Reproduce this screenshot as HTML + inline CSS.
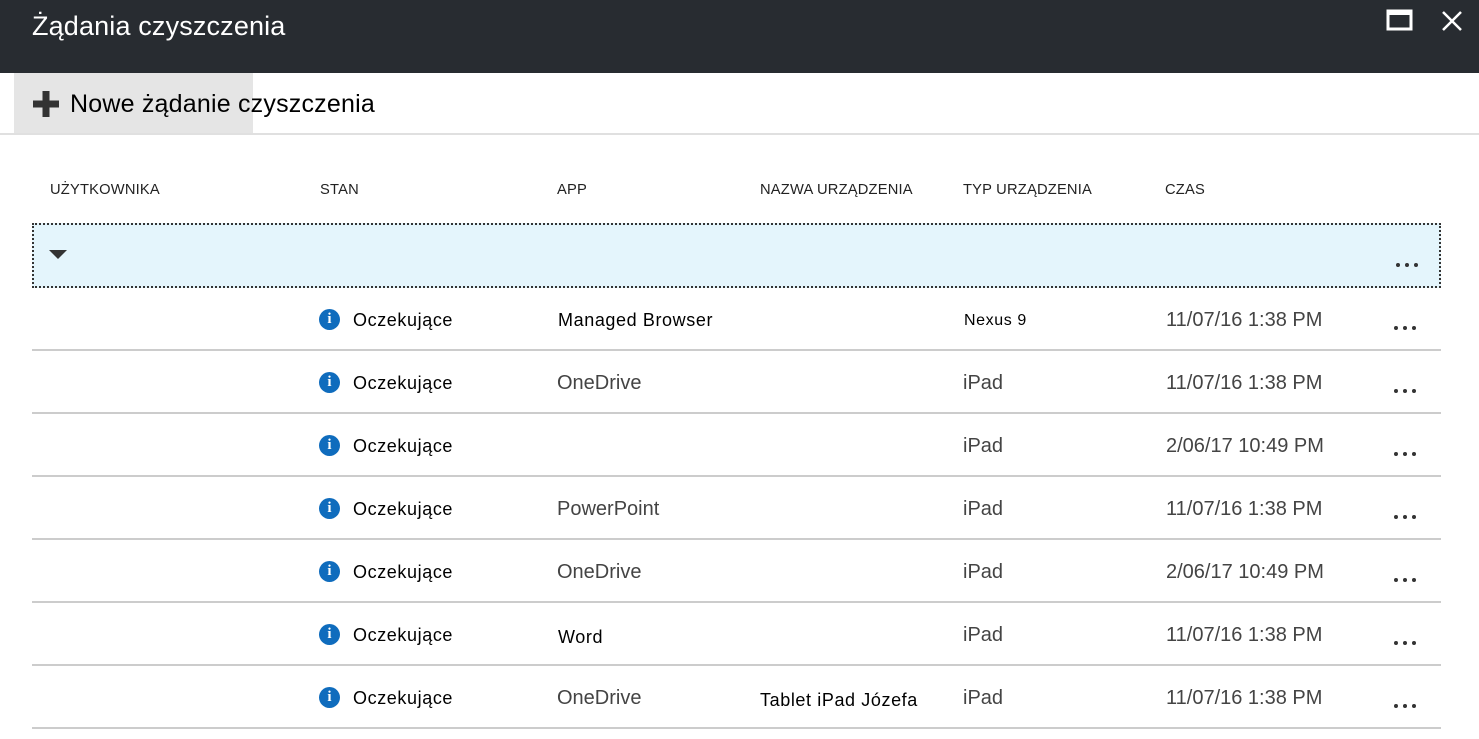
<!DOCTYPE html>
<html><head><meta charset="utf-8"><style>
*{margin:0;padding:0;box-sizing:border-box}
body{width:1479px;height:739px;overflow:hidden;background:#fff;font-family:"Liberation Sans",Arial,sans-serif;position:relative}
.abs{position:absolute}
.hdr{left:0;top:0;width:1479px;height:73px;background:#282c31}
.title{left:32px;top:11px;color:#fff;font-size:27px;white-space:nowrap;letter-spacing:.15px}
.btn{left:14px;top:73px;width:239px;height:61px;background:#e5e5e5}
.btntxt{left:70px;top:90px;font-size:25px;color:#000;white-space:nowrap;letter-spacing:.2px}
.tb{left:0;top:133px;width:1479px;height:2px;background:#e0e0e0}
.ch{top:182px;font-size:14.7px;color:#222;white-space:nowrap;letter-spacing:.2px}
.grp{left:32px;top:223px;width:1409px;height:65px;background:#e4f5fc;border:2px dotted #333}
.row{left:32px;width:1409px;height:63px;border-bottom:2px solid #ccc}
.t{position:absolute;white-space:nowrap}
.b{font-size:18px;color:#000;letter-spacing:.6px}
.g{font-size:20px;color:#444}
.dots{position:absolute;left:1362px;display:flex;gap:5px}
.dots i{display:block;width:4px;height:4px;border-radius:2px;background:#333}
.info{position:absolute;left:287px;width:21px;height:21px;border-radius:50%;background:#0f6cbd;color:#fff;font:bold 15px/21px "Liberation Serif",serif;text-align:center}
</style></head><body>
<div class="abs hdr"></div>
<div class="abs title">Żądania czyszczenia</div>
<svg class="abs" style="left:1386px;top:9px" width="28" height="24"><rect x="2" y="2" width="23" height="18" fill="none" stroke="#fff" stroke-width="3"/><rect x="2" y="2" width="23" height="4" fill="#fff"/></svg>
<svg class="abs" style="left:1440px;top:9px" width="24" height="24"><path d="M3 3L21 21M21 3L3 21" stroke="#fff" stroke-width="2.5"/></svg>
<div class="abs btn"></div>
<svg class="abs" style="left:32px;top:90px" width="28" height="28"><path d="M14 1V27M1 14H27" stroke="#333" stroke-width="7"/></svg>
<div class="abs btntxt">Nowe żądanie czyszczenia</div>
<div class="abs tb"></div>
<div class="abs ch" style="left:50px">UŻYTKOWNIKA</div>
<div class="abs ch" style="left:320px">STAN</div>
<div class="abs ch" style="left:557px">APP</div>
<div class="abs ch" style="left:760px">NAZWA URZĄDZENIA</div>
<div class="abs ch" style="left:963px">TYP URZĄDZENIA</div>
<div class="abs ch" style="left:1165px">CZAS</div>
<div class="abs grp">
<svg style="position:absolute;left:15px;top:25px" width="18" height="10"><path d="M0 0H18L9 9Z" fill="#333"/></svg>
<div class="dots" style="top:38px"><i></i><i></i><i></i></div>
</div>

<div class="abs row" style="top:288px"><div class="info" style="top:21px">i</div><div class="t b" style="left:321px;top:22px">Oczekujące</div><div class="t b" style="left:526px;top:22px">Managed Browser</div><div class="t b" style="left:932px;top:24px;font-size:16px">Nexus 9</div><div class="t g" style="left:1134px;top:21px">11/07/16 1:38 PM</div><div class="dots" style="top:38px"><i></i><i></i><i></i></div></div>
<div class="abs row" style="top:351px"><div class="info" style="top:21px">i</div><div class="t b" style="left:321px;top:22px">Oczekujące</div><div class="t g" style="left:525px;top:21px">OneDrive</div><div class="t g" style="left:931px;top:21px">iPad</div><div class="t g" style="left:1134px;top:21px">11/07/16 1:38 PM</div><div class="dots" style="top:38px"><i></i><i></i><i></i></div></div>
<div class="abs row" style="top:414px"><div class="info" style="top:21px">i</div><div class="t b" style="left:321px;top:22px">Oczekujące</div><div class="t g" style="left:931px;top:21px">iPad</div><div class="t g" style="left:1134px;top:21px">2/06/17 10:49 PM</div><div class="dots" style="top:38px"><i></i><i></i><i></i></div></div>
<div class="abs row" style="top:477px"><div class="info" style="top:21px">i</div><div class="t b" style="left:321px;top:22px">Oczekujące</div><div class="t g" style="left:525px;top:21px">PowerPoint</div><div class="t g" style="left:931px;top:21px">iPad</div><div class="t g" style="left:1134px;top:21px">11/07/16 1:38 PM</div><div class="dots" style="top:38px"><i></i><i></i><i></i></div></div>
<div class="abs row" style="top:540px"><div class="info" style="top:21px">i</div><div class="t b" style="left:321px;top:22px">Oczekujące</div><div class="t g" style="left:525px;top:21px">OneDrive</div><div class="t g" style="left:931px;top:21px">iPad</div><div class="t g" style="left:1134px;top:21px">2/06/17 10:49 PM</div><div class="dots" style="top:38px"><i></i><i></i><i></i></div></div>
<div class="abs row" style="top:603px"><div class="info" style="top:21px">i</div><div class="t b" style="left:321px;top:22px">Oczekujące</div><div class="t b" style="left:526px;top:24px">Word</div><div class="t g" style="left:931px;top:21px">iPad</div><div class="t g" style="left:1134px;top:21px">11/07/16 1:38 PM</div><div class="dots" style="top:38px"><i></i><i></i><i></i></div></div>
<div class="abs row" style="top:666px"><div class="info" style="top:21px">i</div><div class="t b" style="left:321px;top:22px">Oczekujące</div><div class="t g" style="left:525px;top:21px">OneDrive</div><div class="t b" style="left:728px;top:24px">Tablet iPad Józefa</div><div class="t g" style="left:931px;top:21px">iPad</div><div class="t g" style="left:1134px;top:21px">11/07/16 1:38 PM</div><div class="dots" style="top:38px"><i></i><i></i><i></i></div></div>
</body></html>
